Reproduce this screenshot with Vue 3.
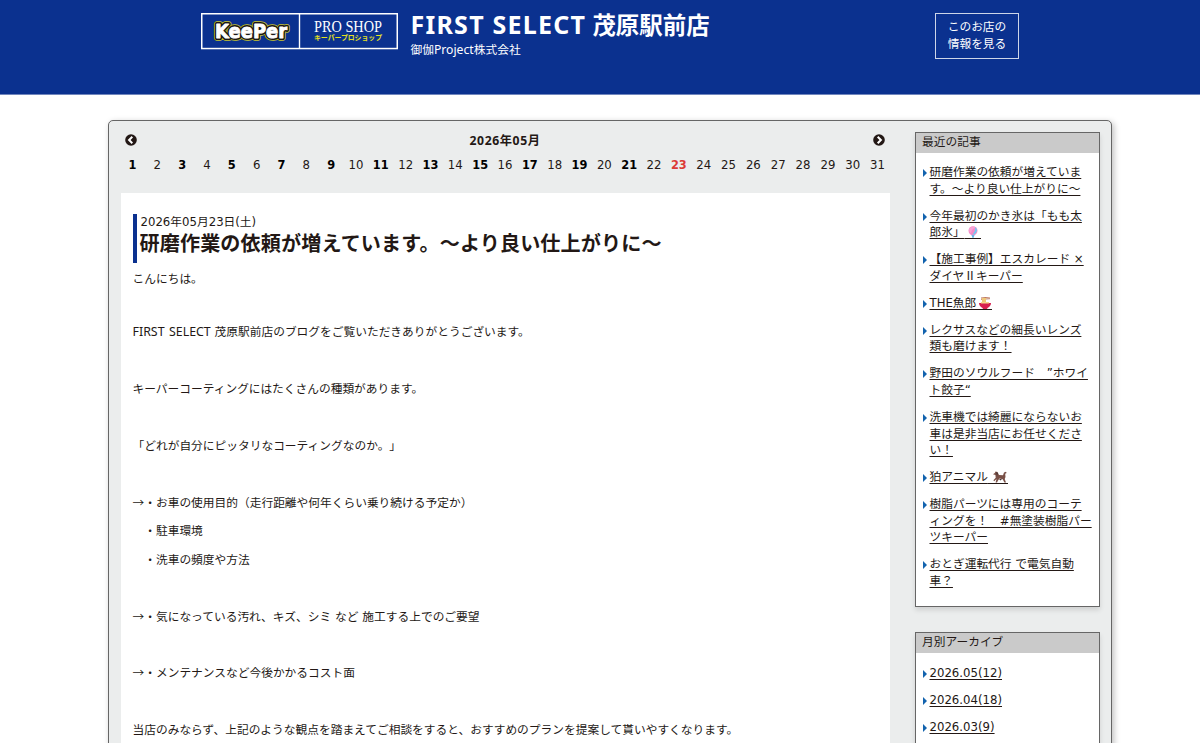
<script setup>
const days = Array.from({ length: 31 }, (_, i) => i + 1)
const posted = [1, 3, 5, 7, 9, 11, 13, 15, 17, 19, 21]
const recent = [
  { lines: ['研磨作業の依頼が増えていま', 'す。～より良い仕上がりに～'] },
  { lines: ['今年最初のかき氷は「もも太', '郎氷」'], icon: 'candy' },
  { lines: ['【施工事例】エスカレード ×', 'ダイヤⅡキーパー'] },
  { lines: ['THE魚郎'], icon: 'noodles' },
  { lines: ['レクサスなどの細長いレンズ', '類も磨けます！'] },
  { lines: ['野田のソウルフード　”ホワイ', 'ト餃子“'] },
  { lines: ['洗車機では綺麗にならないお', '車は是非当店にお任せくださ', 'い！'] },
  { lines: ['狛アニマル'], icon: 'dog' },
  { lines: ['樹脂パーツには専用のコーテ', 'ィングを！　#無塗装樹脂パー', 'ツキーパー'] },
  { lines: ['おとぎ運転代行 で電気自動', '車？'] }
]
const archives = ['2026.05(12)', '2026.04(18)', '2026.03(9)']
const body = [
  'キーパーコーティングにはたくさんの種類があります。', '',
  '「どれが自分にピッタリなコーティングなのか。」', '',
  '→・お車の使用目的（走行距離や何年くらい乗り続ける予定か）',
  '　・駐車環境',
  '　・洗車の頻度や方法', '',
  '→・気になっている汚れ、キズ、シミ など 施工する上でのご要望', '',
  '→・メンテナンスなど今後かかるコスト面', '',
  '当店のみならず、上記のような観点を踏まえてご相談をすると、おすすめのプランを提案して貰いやすくなります。'
]
</script>

<template>
  <div class="page">
    <header class="top">
      <svg class="logo" width="197" height="37" viewBox="0 0 197 37">
        <rect x="0.75" y="0.75" width="195.5" height="34.8" fill="none" stroke="#fff" stroke-width="1.5" />
        <path d="M98.5 0V36" stroke="#fff" stroke-width="1.4" />
        <g class="keeper">
          <text x="14" y="25" textLength="72" lengthAdjust="spacingAndGlyphs" stroke="#c9c52a" stroke-width="5.6">KeePer</text>
          <text x="14" y="25" textLength="72" lengthAdjust="spacingAndGlyphs" stroke="#1a1715" stroke-width="4">KeePer</text>
          <text x="14" y="25" textLength="72" lengthAdjust="spacingAndGlyphs" fill="#fff" stroke="#fff" stroke-width="0.9">KeePer</text>
        </g>
        <text class="pro" x="113" y="19" textLength="68" lengthAdjust="spacingAndGlyphs">PRO SHOP</text>
        <text class="kana" x="113" y="27.3" textLength="68" lengthAdjust="spacingAndGlyphs">キーパープロショップ</text>
      </svg>
      <div class="shop">
        <h1><span class="latin">FIRST SELECT</span> 茂原駅前店</h1>
        <p>御伽<span class="proj">Project</span>株式会社</p>
      </div>
      <a class="info">このお店の<br>情報を見る</a>
    </header>

    <div class="wrap">
      <main>
        <div class="month">
          <svg width="12" height="12" viewBox="0 0 12 12"><circle cx="6" cy="6" r="5.8" /><path d="M7.3 2.8L4.1 6l3.2 3.2" /></svg>
          <b>2026年05月</b>
          <svg width="12" height="12" viewBox="0 0 12 12"><circle cx="6" cy="6" r="5.8" /><path d="M4.7 2.8L7.9 6 4.7 9.2" /></svg>
        </div>
        <div class="days">
          <span v-for="d in days" :key="d" :class="{ posted: posted.includes(d), today: d === 23 }">{{ d }}</span>
        </div>
        <article>
          <div class="heading">
            <time>2026年05月23日(土)</time>
            <h2>研磨作業の依頼が増えています。～より良い仕上がりに～</h2>
          </div>
          <div class="text">
            <p class="hello">こんにちは。</p>
            <p><span class="en">FIRST SELECT</span> 茂原駅前店のブログをご覧いただきありがとうございます。</p>
            <p></p>
            <p v-for="(t, i) in body" :key="i">{{ t }}</p>
          </div>
        </article>
      </main>

      <aside>
        <section>
          <h3>最近の記事</h3>
          <ul>
            <li v-for="(r, i) in recent" :key="i">
              <a><template v-for="(l, j) in r.lines" :key="j"><br v-if="j"><span :class="{ cjk: l.includes('Ⅱ') }">{{ l }}</span></template><svg v-if="r.icon === 'candy'" class="emoji candy" width="14" height="12" viewBox="0 0 14 12"><path d="M5 8h4L7.4 12h-.8z" fill="#62b6e9" /><circle cx="7" cy="4.8" r="4.5" fill="#f58bc9" /><path d="M3 3q3-4 7-1-4 0-5 5-2-1-2-4z" fill="#f9a3d6" /><path d="M9 1q4 3 0 7l-3 1q4-4 3-8z" fill="#70caf4" /></svg><svg v-else-if="r.icon === 'noodles'" class="emoji noodles" width="14" height="12" viewBox="0 0 14 12"><path d="M3 1l9-1M3 2.3l9-.6" stroke="#b56b50" stroke-width=".9" /><path d="M4 1h4v6H4z" fill="#eec777" /><path d="M1 6h12q0 3-3.5 5l-.5 1H5l-.5-1Q1 9 1 6z" fill="#d8204f" /><path d="M3 5h8v1.5H3z" fill="#f4d78e" /></svg><svg v-else-if="r.icon === 'dog'" class="emoji dog" width="14" height="12" viewBox="0 0 14 12"><path d="M0 3.2L1.8 2l.7-1.5L4.5 1 6 4l4 .3L11 1.5l2-.8.6 1.3-1.4.8.3 3.2-.8 2 1.3 3.5h-1.6L9.7 8.3 6.5 7.5 5 9.5 4 11.5H2.6L3.5 8 1.2 10.2.4 9.3 2.7 6.8 2.4 4z" fill="#795047" /><path d="M3 1l2 1-1 3zM6 8h3L7.5 9.5z" fill="#463333" /></svg></a>
            </li>
          </ul>
        </section>
        <section>
          <h3>月別アーカイブ</h3>
          <ul class="months">
            <li v-for="a in archives" :key="a"><a>{{ a }}</a></li>
          </ul>
        </section>
      </aside>
    </div>
  </div>
</template>

<style>
body { background: #fff; }
</style>
<style scoped>
* { box-sizing: border-box; margin: 0; padding: 0; }
.page { height: 743px; overflow: hidden; font: 11.72px/16.67px "DejaVu Sans", "Noto Sans CJK JP", sans-serif; color: #231815; text-spacing-trim: space-all; }
.top { height: 95px; background: #0b318f; border-bottom: 1px solid #7186bd; color: #fff; display: flex; align-items: flex-start; padding: 13px 181px 0 201px; }
.logo { flex: none; display: block; }
.keeper text { font: bold 19px "DejaVu Sans", sans-serif; stroke-linejoin: round; }
.pro { font: 16.5px "Liberation Serif", serif; fill: #fff; }
.kana { font: bold 7px "Liberation Sans", "Noto Sans CJK JP", sans-serif; fill: #e3e01e; }
.shop { flex: 1; margin-left: 12.5px; white-space: nowrap; }
.shop h1 { font: bold 23.45px/24px "Noto Sans", "Noto Sans CJK JP", sans-serif; margin-top: -1.5px; }
.latin { font-size: 25px; letter-spacing: 1.25px; }
.shop p { margin-top: 5.5px; }
.proj { font-family: "Noto Sans", sans-serif; font-size: 12.2px; }
.en { font-family: "Noto Sans", sans-serif; font-size: 12.4px; }
.info { width: 84px; height: 46px; border: 1px solid #cdd5e8; padding-top: 5px; text-align: center; flex: none; }
.wrap { width: 1004px; height: 700px; margin: 25px 0 0 108px; border: 1px solid #666; border-radius: 5px; background: #ebeded; box-shadow: 2px 2px 6px rgba(0,0,0,.25); display: flex; align-items: flex-start; padding: 11px 11.5px 0 11px; justify-content: space-between; }
main { width: 770px; }
.month { display: flex; justify-content: space-between; padding: 0 5px; height: 25px; }
.month b { font: bold 12.2px/18px "Noto Sans", "Noto Sans CJK JP", sans-serif; letter-spacing: .6px; }
.month svg { margin-top: 2px; fill: #231815; }
.month path { fill: none; stroke: #fff; stroke-width: 2; }
.days { display: grid; grid-template-columns: repeat(31, 1fr); text-align: center; height: 36px; }
.days .posted, .days .today { font-weight: bold; font-size: 11.4px; color: #000; }
.days .today { color: #dc3b36; }
article { background: #fff; height: 600px; padding: 21px 12px 0 12px; margin-left: .5px; }
.heading { border-left: 4px solid #0b318f; height: 49px; padding-left: 4px; white-space: nowrap; }
.heading time { display: block; }
.heading h2 { font: bold 20.1px/24px "Noto Sans CJK JP", sans-serif; margin-left: -1px; letter-spacing: .12px; }
.text { font-family: "Noto Sans CJK JP", sans-serif; white-space: pre; word-spacing: 1.2px; }
.text p { height: 28.46px; line-height: 28.46px; }
.text .hello { height: 54px; padding-top: .5px; }
aside { width: 184.5px; }
section { border: 1px solid #666; background: #fff; margin-bottom: 25px; box-shadow: 0 3px 5px rgba(0,0,0,.12); padding-bottom: 6px; }
h3 { font: 11.72px/19px "DejaVu Sans", "Noto Sans CJK JP", sans-serif; background: #cacaca; padding-left: 6px; height: 20px; }
ul { list-style: none; padding: 11px 0 0 13.5px; white-space: nowrap; }
.months { padding-top: 12px; }
li { margin-bottom: 10.25px; position: relative; }
li::before { content: ""; position: absolute; left: -7px; top: 5px; border: 4px solid transparent; border-left-color: #1263ae; border-right: 0; }
a { color: inherit; }
.cjk { font-family: "Noto Sans CJK JP", sans-serif; line-height: 1; }
li a { text-decoration: underline; text-underline-offset: 2px; }
.emoji { box-sizing: content-box; vertical-align: -3px; border-bottom: 1px solid #231815; }
.candy { padding-left: 1px; padding-right: 1px; }
.noodles { padding-left: 2px; }
.dog { padding-left: 5px; padding-right: 1px; }
</style>
